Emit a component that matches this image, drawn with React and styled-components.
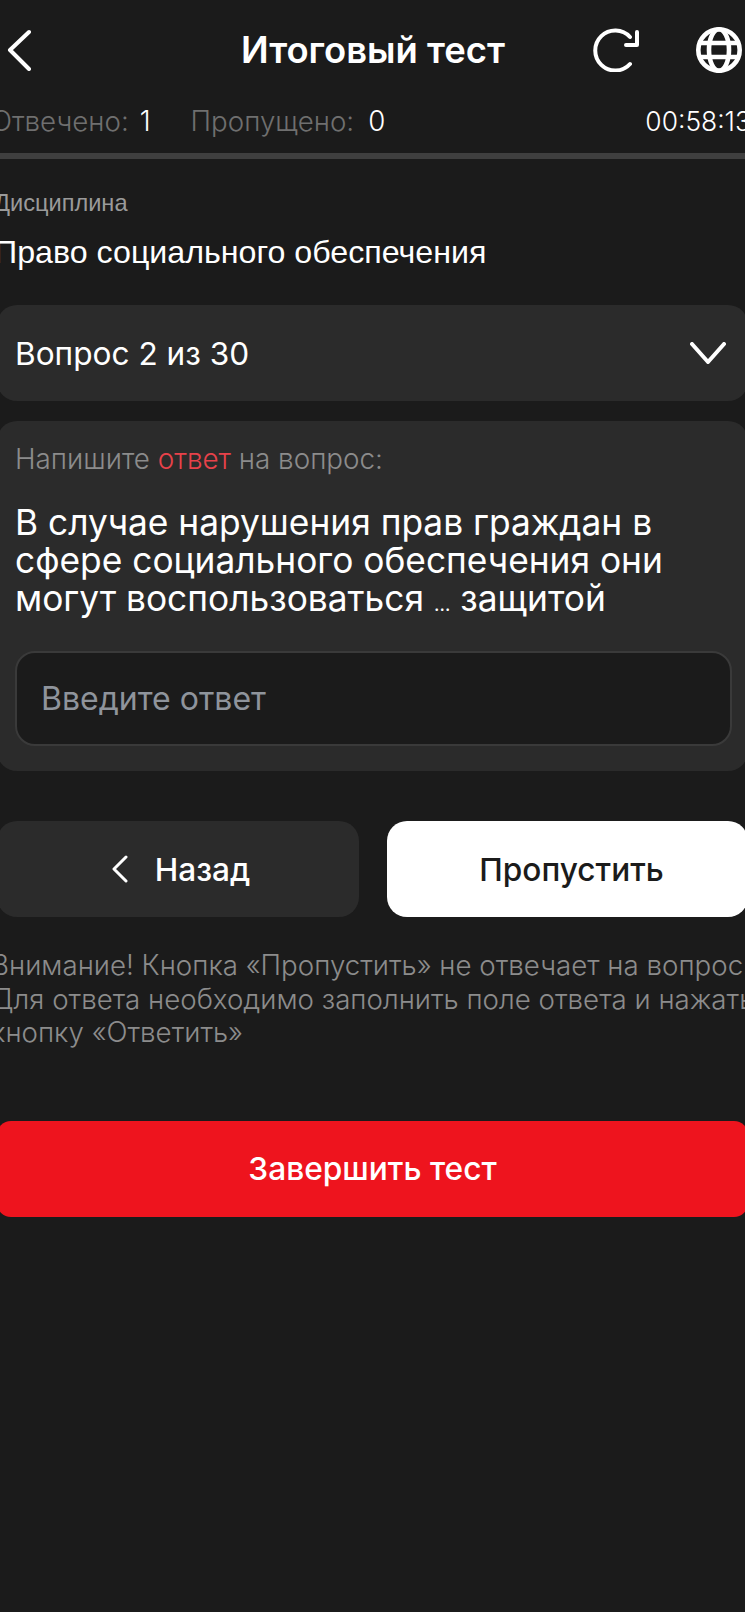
import styled, { createGlobalStyle } from "styled-components";

const GlobalStyle = createGlobalStyle`
  html, body {
    margin: 0;
    background: #1b1b1b;
  }
`;

export default function App() {
  return (
    <>
      <GlobalStyle />
      <S.Viewport>
        <S.Page>
          <S.Header>
            <S.IconButton>
              <svg width="30" height="42" viewBox="0 0 30 42" fill="none" stroke="#fff" strokeWidth="4" strokeLinecap="round" strokeLinejoin="round">
                <path d="M23 3 L4 21 L23 40" />
              </svg>
            </S.IconButton>
            <S.Title>Итоговый тест</S.Title>
            <S.HeaderIcons>
              <svg width="48" height="44" viewBox="0 0 48 44" fill="none" stroke="#fff" strokeWidth="4" strokeLinecap="round" strokeLinejoin="round">
                <path d="M38 9 A20 20 0 1 0 38 36" />
                <path d="M45 4 V17 H34" />
              </svg>
              <svg width="46" height="46" viewBox="0 0 46 46" fill="none" stroke="#fff" strokeWidth="4.6">
                <circle cx="23" cy="23" r="20.7" />
                <ellipse cx="23" cy="23" rx="10" ry="20.7" />
                <path d="M2 16 H44 M2 30 H44" />
              </svg>
            </S.HeaderIcons>
          </S.Header>
          <S.Stats>
            <S.StatLabel>Отвечено:</S.StatLabel>
            <S.StatValue $gap={11}>1</S.StatValue>
            <S.StatLabel $skipped>Пропущено:</S.StatLabel>
            <S.StatValue $gap={14}>0</S.StatValue>
            <S.Timer>00:58:13</S.Timer>
          </S.Stats>
          <S.Progress />
          <S.Subject>
            <S.SubjectLabel>Дисциплина</S.SubjectLabel>
            <S.SubjectName>Право социального обеспечения</S.SubjectName>
          </S.Subject>
          <S.Selector>
            Вопрос 2 из 30
            <svg width="36" height="22" viewBox="0 0 36 22" fill="none" stroke="#fff" strokeWidth="4" strokeLinecap="round" strokeLinejoin="round">
              <path d="M2 2 L18 20 L34 2" />
            </svg>
          </S.Selector>
          <S.QuestionCard>
            <S.Hint>
              Напишите <S.Accent>ответ</S.Accent> на вопрос:
            </S.Hint>
            <S.Question>
              В случае нарушения прав граждан в сфере социального обеспечения они могут воспользоваться <S.Dots>…</S.Dots> защитой
            </S.Question>
            <S.Answer placeholder="Введите ответ" />
          </S.QuestionCard>
          <S.Actions>
            <S.Button>
              <svg width="18" height="28" viewBox="0 0 18 28" fill="none" stroke="#fff" strokeWidth="3" strokeLinecap="round" strokeLinejoin="round">
                <path d="M15 2 L3 14 L15 26" />
              </svg>
              Назад
            </S.Button>
            <S.Button $light>Пропустить</S.Button>
          </S.Actions>
          <S.Note>
            Внимание! Кнопка «Пропустить» не отвечает на вопрос.
            <br />
            Для ответа необходимо заполнить поле ответа и нажать
            <br />
            кнопку «Ответить»
          </S.Note>
          <S.Finish>Завершить тест</S.Finish>
        </S.Page>
      </S.Viewport>
    </>
  );
}

const S = {
  Viewport: styled.div`
    width: 745px;
    height: 1612px;
    overflow: hidden;
    background: #1b1b1b;
    color: #fff;
    font-family: Inter, sans-serif;
  `,
  Page: styled.div`
    width: 751px;
    margin-left: -3px;
    display: flex;
    flex-direction: column;
  `,
  Header: styled.header`
    height: 100px;
    display: flex;
    align-items: center;
    justify-content: space-between;
    padding: 0 6px 0 9px;
    position: relative;
  `,
  IconButton: styled.div`
    display: flex;
    width: 30px;
  `,
  Title: styled.h1`
    position: absolute;
    left: 244px;
    top: 30px;
    margin: 0;
    font-size: 36.4px;
    line-height: 40px;
    font-weight: 600;
  `,
  HeaderIcons: styled.div`
    display: flex;
    align-items: center;
    gap: 56px;
  `,
  Stats: styled.div`
    height: 42px;
    margin-left: -6px;
    display: flex;
    align-items: center;
    font-size: 27.7px;
    font-weight: 300;
  `,
  StatLabel: styled.span`
    color: #6f6f6f;
    margin-left: ${(p) => (p.$skipped ? "40px" : "0")};
  `,
  StatValue: styled.span`
    color: #fff;
    margin-left: ${(p) => p.$gap}px;
  `,
  Timer: styled.span`
    margin-left: auto;
    margin-right: -3px;
    font-size: 26.4px;
  `,
  Progress: styled.div`
    height: 6px;
    margin-top: 11px;
    background: #3f3f3f;
  `,
  Subject: styled.div`
    display: flex;
    flex-direction: column;
    margin-left: -3px;
    font-family: "Liberation Sans", sans-serif;
  `,
  SubjectLabel: styled.div`
    margin-top: 30px;
    font-size: 23.6px;
    line-height: 28px;
    color: #9a9a9a;
  `,
  SubjectName: styled.div`
    margin-top: 17px;
    font-size: 32.2px;
    line-height: 36px;
  `,
  Selector: styled.div`
    height: 96px;
    margin-top: 35px;
    padding: 0 22px 0 18px;
    display: flex;
    align-items: center;
    justify-content: space-between;
    background: #2b2b2b;
    border-radius: 20px;
    font-size: 31.6px;
  `,
  QuestionCard: styled.section`
    margin-top: 20px;
    padding: 22px 18px 25px;
    background: #2b2b2b;
    border-radius: 20px;
  `,
  Hint: styled.div`
    font-size: 27.8px;
    line-height: 32px;
    font-weight: 300;
    color: #8c8c8c;
  `,
  Accent: styled.span`
    color: #e8424a;
  `,
  Question: styled.div`
    margin-top: 29px;
    width: 700px;
    font-size: 35.3px;
    line-height: 38px;
  `,
  Dots: styled.span`
    font-size: 19px;
    line-height: 0;
  `,
  Answer: styled.input`
    display: block;
    box-sizing: border-box;
    width: 717px;
    height: 95px;
    margin-top: 33px;
    padding: 0 24px;
    background: #1b1b1b;
    border: 2px solid #3a3a3a;
    border-radius: 20px;
    font-family: Inter, sans-serif;
    font-size: 32px;
    color: #fff;
    outline: none;

    &::placeholder {
      color: #8f949c;
    }
  `,
  Actions: styled.div`
    margin-top: 50px;
    display: grid;
    grid-template-columns: 362px 1fr;
    gap: 28px;
  `,
  Button: styled.button`
    height: 96px;
    padding: 0 0 0 ${(p) => (p.$light ? "8px" : "5px")};
    display: flex;
    align-items: center;
    justify-content: center;
    gap: 26px;
    border: 0;
    border-radius: 20px;
    background: ${(p) => (p.$light ? "#fff" : "#2b2b2b")};
    color: ${(p) => (p.$light ? "#1b1b1b" : "#fff")};
    font-family: Inter, sans-serif;
    font-size: 31.6px;
    font-weight: 500;
  `,
  Note: styled.p`
    margin: 32px 0 0 -6px;
    font-size: 27.7px;
    line-height: 33.5px;
    font-weight: 300;
    color: #8c8c8c;
    white-space: nowrap;
  `,
  Finish: styled.button`
    height: 96px;
    margin-top: 71px;
    border: 0;
    border-radius: 14px;
    background: #ee141e;
    color: #fff;
    font-family: Inter, sans-serif;
    font-size: 31.7px;
    font-weight: 500;
  `,
};
